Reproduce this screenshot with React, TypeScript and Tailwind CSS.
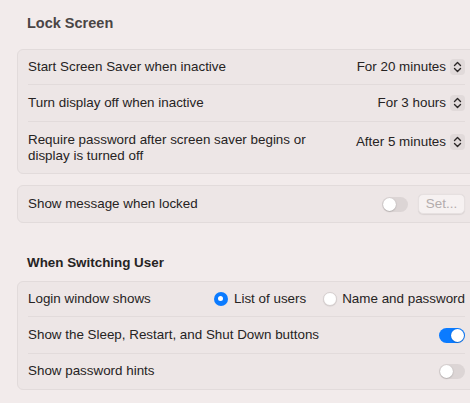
function Stepper() {
  return (
    <span className="ml-[4px] flex h-[16px] w-[15px] items-center justify-center rounded-[4px] bg-[#e1dada]">
      <svg width="9" height="12" viewBox="0 0 9 12" fill="none" stroke="#2a2626" strokeWidth="1.4" strokeLinecap="round" strokeLinejoin="round">
        <path d="M1.5 4.5 L4.5 1.5 L7.5 4.5" />
        <path d="M1.5 7.5 L4.5 10.5 L7.5 7.5" />
      </svg>
    </span>
  );
}

function Toggle({ on }: { on?: boolean }) {
  return (
    <span
      className={
        on
          ? "flex h-[15px] w-[26px] items-center justify-end rounded-full bg-[#0b7bff] px-[1px]"
          : "flex h-[15px] w-[26px] items-center justify-start rounded-full bg-[#dcd5d5] px-[1px]"
      }
    >
      <span className="h-[13px] w-[13px] rounded-full bg-white shadow-[0_0.5px_1.5px_rgba(0,0,0,0.3)]" />
    </span>
  );
}

function Radio({ on }: { on?: boolean }) {
  return on ? (
    <span className="flex h-[14px] w-[14px] shrink-0 items-center justify-center rounded-full bg-[#0b7bff]">
      <span className="h-[5px] w-[5px] rounded-full bg-white" />
    </span>
  ) : (
    <span className="block h-[14px] w-[14px] shrink-0 rounded-full border border-[#d6cfcf] bg-white shadow-[0_0.5px_1px_rgba(0,0,0,0.12)]" />
  );
}

function Row({ h, last, children }: { h: string; last?: boolean; children: React.ReactNode }) {
  return (
    <div className="px-[10px]">
      <div className={`flex items-center justify-between ${h} ${last ? "" : "border-b border-[#e2dbdb]"}`}>
        {children}
      </div>
    </div>
  );
}

export default function App() {
  return (
    <div
      className="h-[403px] w-[470px] overflow-hidden bg-[#f2ebeb] pt-[1px] text-[13.4px] text-[#262323]"
      style={{ fontFamily: '"Liberation Sans", Arial, sans-serif' }}
    >
      <div className="ml-[17px] w-[459px] whitespace-nowrap">
        <div className="h-[48px] pl-[10px] pt-[13px] text-[14.5px] font-bold leading-[18px] text-[#4a4545]">
          Lock Screen
        </div>

        <div className="rounded-[6px] border border-[#e2dbdb] bg-[#ede6e6]">
          <Row h="h-[35px]">
            <span>Start Screen Saver when inactive</span>
            <span className="flex items-center">
              For 20 minutes
              <Stepper />
            </span>
          </Row>
          <Row h="h-[37px]">
            <span>Turn display off when inactive</span>
            <span className="flex items-center">
              For 3 hours
              <Stepper />
            </span>
          </Row>
          <Row h="h-[51px]" last>
            <span className="leading-[16px]">
              Require password after screen saver begins or
              <br />
              display is turned off
            </span>
            <span className="flex items-center self-start pt-[10px]">
              After 5 minutes
              <Stepper />
            </span>
          </Row>
        </div>

        <div className="mt-[11px] rounded-[6px] border border-[#e2dbdb] bg-[#ede6e6]">
          <Row h="h-[36px]" last>
            <span>Show message when locked</span>
            <span className="flex items-center gap-[10px]">
              <Toggle />
              <span className="flex h-[20px] w-[47px] items-center justify-center rounded-[5px] border border-[#e6e0e0] bg-[#f6f1f1] text-[#b3acac] shadow-[0_0.5px_1px_rgba(0,0,0,0.08)]">
                Set...
              </span>
            </span>
          </Row>
        </div>

        <div className="mt-[31px] mb-[9px] h-[18px] pl-[10px] font-bold leading-[18px] text-[#262323]">
          When Switching User
        </div>

        <div className="rounded-[6px] border border-[#e2dbdb] bg-[#ede6e6]">
          <Row h="h-[35px]">
            <span>Login window shows</span>
            <span className="flex items-center">
              <Radio on />
              <span className="ml-[6px]">List of users</span>
              <span className="ml-[17px]">
                <Radio />
              </span>
              <span className="ml-[5px]">Name and password</span>
            </span>
          </Row>
          <Row h="h-[37px]">
            <span>Show the Sleep, Restart, and Shut Down buttons</span>
            <Toggle on />
          </Row>
          <Row h="h-[35px]" last>
            <span>Show password hints</span>
            <Toggle />
          </Row>
        </div>
      </div>
    </div>
  );
}
